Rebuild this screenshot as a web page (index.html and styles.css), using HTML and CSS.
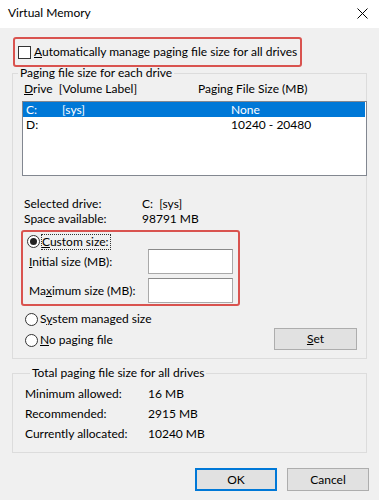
FILE: index.html
```html
<!DOCTYPE html>
<html>
<head>
<meta charset="utf-8">
<link rel="stylesheet" href="styles.css">
</head>
<body>
<div class="window">
  <div class="titlebar">
    <span class="title">Virtual Memory</span>
    <svg class="close" width="11" height="11" viewBox="0 0 11 11"><path d="M0.5 0.5 L10.5 10.5 M10.5 0.5 L0.5 10.5" stroke="#000" stroke-width="1" fill="none"/></svg>
  </div>
  <div class="body">
    <div class="highlight hl-auto">
      <span class="checkbox"></span>
      <span class="txt"><u>A</u>utomatically manage paging file size for all drives</span>
    </div>

    <fieldset class="group group-drives">
      <legend>Paging file size for each drive</legend>
      <div class="list-head">
        <span class="col-drive"><u>D</u>rive&nbsp; [Volume Label]</span>
        <span class="col-size">Paging File Size (MB)</span>
      </div>
      <div class="listbox">
        <div class="row selected"><span class="c1">C:</span><span class="c2">[sys]</span><span class="c3">None</span></div>
        <div class="row"><span class="c1">D:</span><span class="c2"></span><span class="c3">10240 - 20480</span></div>
      </div>
      <div class="info">
        <div class="info-row"><span class="ilabel">Selected drive:</span><span>C:&nbsp; [sys]</span></div>
        <div class="info-row"><span class="ilabel">Space available:</span><span>98791 MB</span></div>
      </div>
      <div class="highlight hl-custom">
        <div class="radio-row first">
          <span class="radio checked"></span>
          <span class="focus"><u>C</u>ustom size:</span>
        </div>
        <div class="field-row"><span class="flabel"><u>I</u>nitial size (MB):</span><span class="input"></span></div>
        <div class="field-row"><span class="flabel">Ma<u>x</u>imum size (MB):</span><span class="input"></span></div>
      </div>
      <div class="options">
        <div class="radios">
          <div class="radio-row"><span class="radio"></span><span>S<u>y</u>stem managed size</span></div>
          <div class="radio-row"><span class="radio"></span><span><u>N</u>o paging file</span></div>
        </div>
        <button class="btn set"><u>S</u>et</button>
      </div>
    </fieldset>

    <fieldset class="group group-total">
      <legend>Total paging file size for all drives</legend>
      <div class="total-row"><span class="tlabel">Minimum allowed:</span><span>16 MB</span></div>
      <div class="total-row"><span class="tlabel">Recommended:</span><span>2915 MB</span></div>
      <div class="total-row"><span class="tlabel">Currently allocated:</span><span>10240 MB</span></div>
    </fieldset>

    <div class="actions">
      <button class="btn default">OK</button>
      <button class="btn">Cancel</button>
    </div>
  </div>
</div>
</body>
</html>
```
FILE: styles.css
```css
* { box-sizing: border-box; }
html, body { margin: 0; padding: 0; }
body {
  width: 379px;
  height: 500px;
  background: #f0f0f0;
  font-family: Lato, "Noto Sans", sans-serif;
  font-size: 12px;
  color: #000;
  overflow: hidden;
  white-space: nowrap;
}
u { text-decoration: underline; text-underline-offset: 1px; }
.titlebar {
  height: 28px;
  background: #fff;
  display: flex;
  align-items: center;
  justify-content: space-between;
  padding: 0 11px 0 8px;
}
.title { line-height: 14px; margin-top: -2px; }
.close { display: block; margin-top: -2px; }
.body { padding-top: 9px; }

.highlight {
  border: 2px solid #d9534f;
  border-radius: 3px;
}
.hl-auto {
  margin-left: 13px;
  width: 289px;
  height: 30px;
  display: flex;
  align-items: center;
  padding-left: 3px;
}
.checkbox {
  width: 13px;
  height: 13px;
  border: 1px solid #333;
  background: #fff;
  margin-right: 3px;
  flex: none;
}
.txt { line-height: 14px; }

.group {
  margin: 0 0 0 12px;
  width: 355px;
  border: 1px solid #dcdcdc;
  padding: 0;
  min-width: 0;
}
.group legend {
  margin-left: 5px;
  padding: 0 2px;
  line-height: 12px;
}
.group-drives { padding: 0 0 8px 0; }

.list-head {
  display: flex;
  line-height: 14px;
  margin-top: 3px;
  padding-left: 11px;
}
.col-drive { width: 174px; }
.listbox {
  margin: 5px 0 0 9px;
  width: 345px;
  height: 75px;
  border: 1px solid #828790;
  background: #fff;
}
.row {
  display: flex;
  height: 15px;
  line-height: 15px;
  padding-left: 3px;
}
.row.selected { background: #0078d7; color: #fff; margin-right: 1px; }
.c1 { width: 36px; }
.c2 { width: 169px; }

.info { margin-top: 20px; padding-left: 11px; }
.info-row { display: flex; line-height: 15px; }
.ilabel { width: 118px; }

.hl-custom {
  margin: 4px 0 0 8px;
  width: 219px;
  height: 76px;
  padding: 2px 0 0 2px;
}
.radio-row {
  display: flex;
  align-items: center;
  line-height: 14px;
}
.radio-row.first { height: 15px; margin-left: 2px; }
.radio {
  width: 13px;
  height: 13px;
  border: 1px solid #333;
  border-radius: 50%;
  background: #fff;
  margin-right: 2px;
  flex: none;
  display: flex;
  align-items: center;
  justify-content: center;
}
.radio.checked::after {
  content: "";
  width: 7px;
  height: 7px;
  border-radius: 50%;
  background: #222;
}
.focus {
  outline: 1px dotted #333;
  outline-offset: 0;
  padding: 0 1px 0 0;
  line-height: 14px;
}
.field-row {
  display: flex;
  align-items: center;
  padding-left: 4px;
}
.field-row + .field-row { margin-top: 4px; }
.flabel { width: 119px; line-height: 14px; }
.input {
  width: 85px;
  height: 25px;
  border: 1px solid #a9a9a9;
  border-top-color: #8a8a8a;
  background: #fff;
}

.options {
  display: flex;
  justify-content: space-between;
  align-items: flex-end;
  padding: 6px 9px 0 12px;
}
.radios { display: flex; flex-direction: column; gap: 7px; margin-bottom: 3px; }

.btn {
  font: inherit;
  color: #000;
  background: #e1e1e1;
  border: 1px solid #adadad;
  border-radius: 0;
  padding: 0;
  height: 23px;
  width: 82px;
  line-height: 20px;
}
.btn.set { width: 83px; height: 22px; }
.btn.default { border-color: #0078d7; box-shadow: inset 0 0 0 1px #0078d7; }

.group-total { margin-top: 8px; padding: 5px 0 8px 12px; }
.total-row { display: flex; line-height: 20px; }
.tlabel { width: 123px; }

.actions {
  display: flex;
  justify-content: flex-end;
  gap: 10px;
  padding-right: 10px;
  margin-top: 15px;
}
```
